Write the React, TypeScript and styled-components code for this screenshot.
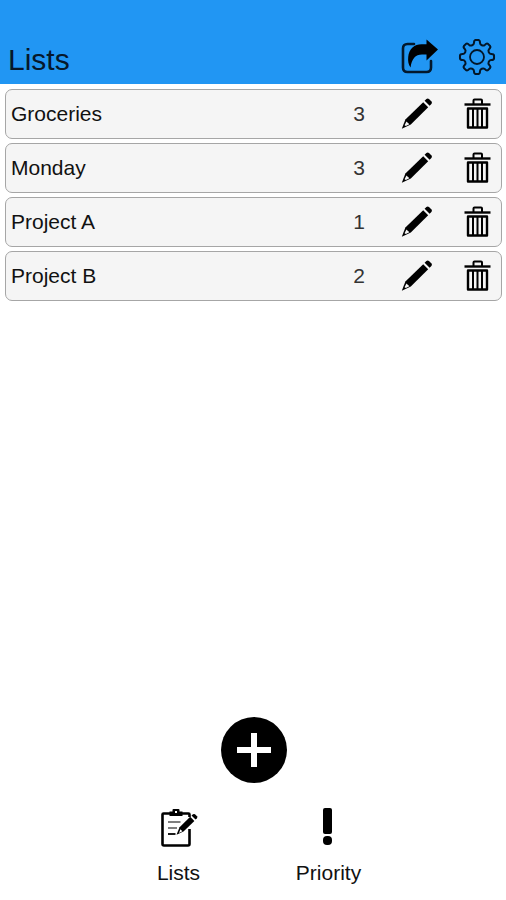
import React from 'react';
import styled, { createGlobalStyle } from 'styled-components';

const GlobalStyle = createGlobalStyle`
  *, *::before, *::after { box-sizing: border-box; }
  body {
    margin: 0;
    background: #fff;
    color: #111;
    font-family: "Liberation Sans", Arial, sans-serif;
  }
`;

const Page = styled.div`
  display: flex;
  flex-direction: column;
  min-height: 100vh;
`;

const Header = styled.header`
  display: flex;
  align-items: flex-end;
  justify-content: space-between;
  padding: 38px 8px 8px;
  background: #2196f3;
`;

const Title = styled.h1`
  margin: 0;
  font-size: 30px;
  line-height: 32px;
  font-weight: 400;
  color: #06182b;
`;

const Actions = styled.div`
  display: flex;
  gap: 16px;
`;

const IconButton = styled.button<{ $width: number; $height: number }>`
  display: flex;
  align-items: center;
  justify-content: center;
  flex: none;
  width: ${(p) => p.$width}px;
  height: ${(p) => p.$height}px;
  padding: 0;
  border: 0;
  background: transparent;
  color: #000;
  cursor: pointer;
`;

const Lists = styled.ul`
  display: flex;
  flex-direction: column;
  flex: 1;
  gap: 4px;
  margin: 0;
  padding: 5px 4px 4px 5px;
  list-style: none;
`;

const Row = styled.li`
  display: flex;
  align-items: center;
  height: 50px;
  padding: 0 4px 0 5px;
  border: 1px solid #a6a6a6;
  border-radius: 7px;
  background: #f5f5f5;
  font-size: 21px;
  line-height: 24px;
`;

const RowName = styled.span`
  flex: 1;
  min-width: 0;
`;

const RowCount = styled.span`
  width: 32px;
  margin-right: 20px;
  text-align: center;
  color: #333;
`;

const RowActions = styled.div`
  display: flex;
  gap: 20px;
`;

const Footer = styled.footer`
  display: flex;
  flex-direction: column;
  align-items: center;
  gap: 25px;
  padding: 0 0 15px 1px;
`;

const AddButton = styled.button`
  display: flex;
  align-items: center;
  justify-content: center;
  width: 66px;
  height: 66px;
  padding: 0;
  border: 0;
  border-radius: 50%;
  background: #000;
  color: #fff;
  cursor: pointer;
`;

const Tabs = styled.nav`
  display: flex;
`;

const Tab = styled.button`
  display: flex;
  flex-direction: column;
  align-items: center;
  gap: 13px;
  width: 150px;
  padding: 0;
  border: 0;
  background: transparent;
  color: #111;
  font: inherit;
  font-size: 21px;
  line-height: 24px;
  cursor: pointer;
`;

const ShareIcon = () => (
  <svg width="40" height="36" viewBox="-2 0 40 36" fill="none" aria-hidden="true">
    <path
      d="M13 5H6.5Q2 5 2 9.5V28.5Q2 33 6.5 33H25.5Q30 33 30 28.5V22"
      stroke="#03182c"
      strokeWidth="2.6"
      strokeLinecap="round"
    />
    <path
      d="M25.5 0.5L37 10.5L25.5 21.5V15.5H21C14.5 15.5 10.5 20 9.6 28.5C7.4 25.5 6.8 22 7.2 18C8 9.5 13.5 5.3 20.5 5.3H25.5Z"
      fill="#000"
    />
  </svg>
);

const TEETH = 8;

const gearPoint = (degrees: number, radius: number) => {
  const a = ((degrees - 90) * Math.PI) / 180;
  return `${(19 + radius * Math.cos(a)).toFixed(2)} ${(19 + radius * Math.sin(a)).toFixed(2)}`;
};

const gearPath =
  Array.from({ length: TEETH }, (_, i) => {
    const t = (i * 360) / TEETH;
    return [
      i === 0 ? `M${gearPoint(t - 12, 14.4)}` : '',
      `Q${gearPoint(t - 10.5, 17)} ${gearPoint(t - 5, 17.1)}`,
      `L${gearPoint(t + 5, 17.1)}`,
      `Q${gearPoint(t + 10.5, 17)} ${gearPoint(t + 12, 14.4)}`,
      `C${gearPoint(t + 15, 12.3)} ${gearPoint(t + 30, 12.3)} ${gearPoint(t + 33, 14.4)}`,
    ].join('');
  }).join('') + 'Z';

const GearIcon = () => (
  <svg width="38" height="38" viewBox="0 0 38 38" fill="none" stroke="#031627" aria-hidden="true">
    <path d={gearPath} strokeWidth="2" strokeLinejoin="round" />
    <circle cx="19" cy="19" r="7" strokeWidth="1.8" />
  </svg>
);

const PencilIcon = () => (
  <svg width="32" height="32" viewBox="0 0 32 32" aria-hidden="true">
    <path d="M22.2 4.2L27.2 9.2L9.8 26.4L0.8 30.8L4.4 21.6Z" fill="#000" />
    <path d="M5.4 23.4L8.4 26.2L4.8 28L3.6 27.2Z" fill="#f5f5f5" />
    <path
      d="M23.6 2.8L25.4 1.1Q26.7 0 28 1.1L30.5 3.6Q31.5 4.8 30.4 6L28.6 7.8Z"
      fill="#000"
    />
  </svg>
);

const TrashIcon = () => (
  <svg width="28" height="32" viewBox="0 0 28 32" fill="none" stroke="#000" aria-hidden="true">
    <path d="M9.5 6V2.5Q9.5 1.5 10.5 1.5H17Q18 1.5 18 2.5V6" strokeWidth="2" />
    <path d="M0.5 6.5H26.5" strokeWidth="2.4" />
    <path d="M4 10.5H23V29.5H4Z" strokeWidth="2.4" strokeLinejoin="round" />
    <path d="M9 11V29M13.5 11V29M18 11V29" strokeWidth="2" />
  </svg>
);

const PlusIcon = () => (
  <svg width="34" height="34" viewBox="0 0 34 34" aria-hidden="true">
    <path d="M17 0V34M0 17H34" stroke="currentColor" strokeWidth="6" />
  </svg>
);

const ClipboardIcon = () => (
  <svg width="40" height="40" viewBox="-1 0 40 40" fill="none" aria-hidden="true">
    <path
      d="M10 5.5H3.5Q2.5 5.5 2.5 6.5V36Q2.5 37.5 4 37.5H28Q29.5 37.5 29.5 36V21M22 5.5H28.5Q29.5 5.5 29.5 6.5V9"
      stroke="#000"
      strokeWidth="2.6"
    />
    <path
      d="M9.5 3.5H12.5V2Q12.5 1 13.5 1H18.5Q19.5 1 19.5 2V3.5H22.5V8H9.5ZM15 3V5H17V3Z"
      fill="#000"
      fillRule="evenodd"
    />
    <path d="M8 14H20.5M8 20H17" stroke="#555" strokeWidth="1.6" />
    <path d="M8 26H15.5" stroke="#000" strokeWidth="1.8" />
    <path d="M30.2 8.7L34.4 12.9L23.5 23.4L16.5 26.8L19.6 19.2Z" fill="#000" />
    <path d="M20.4 21.2L22.4 23.2L19 25Z" fill="#fff" />
    <path d="M31.5 7.6L33 6.3Q34 5.5 35 6.3L37 8.2Q37.8 9.2 36.9 10.2L35.5 11.6Z" fill="#000" />
  </svg>
);

const ExclamationIcon = () => (
  <svg width="38" height="40" viewBox="0 0 38 40" aria-hidden="true">
    <rect x="13" y="0" width="9" height="26" rx="2" fill="#000" />
    <rect x="13" y="28" width="9" height="9" rx="4" fill="#000" />
  </svg>
);

const lists = [
  { name: 'Groceries', count: 3 },
  { name: 'Monday', count: 3 },
  { name: 'Project A', count: 1 },
  { name: 'Project B', count: 2 },
];

export default function App() {
  return (
    <>
      <GlobalStyle />
      <Page>
        <Header>
          <Title>Lists</Title>
          <Actions>
            <IconButton $width={42} $height={38} aria-label="Share">
              <ShareIcon />
            </IconButton>
            <IconButton $width={42} $height={38} aria-label="Settings">
              <GearIcon />
            </IconButton>
          </Actions>
        </Header>
        <Lists>
          {lists.map((list) => (
            <Row key={list.name}>
              <RowName>{list.name}</RowName>
              <RowCount>{list.count}</RowCount>
              <RowActions>
                <IconButton $width={44} $height={40} aria-label={`Edit ${list.name}`}>
                  <PencilIcon />
                </IconButton>
                <IconButton $width={38} $height={40} aria-label={`Delete ${list.name}`}>
                  <TrashIcon />
                </IconButton>
              </RowActions>
            </Row>
          ))}
        </Lists>
        <Footer>
          <AddButton aria-label="Add list">
            <PlusIcon />
          </AddButton>
          <Tabs>
            <Tab>
              <ClipboardIcon />
              Lists
            </Tab>
            <Tab>
              <ExclamationIcon />
              Priority
            </Tab>
          </Tabs>
        </Footer>
      </Page>
    </>
  );
}
